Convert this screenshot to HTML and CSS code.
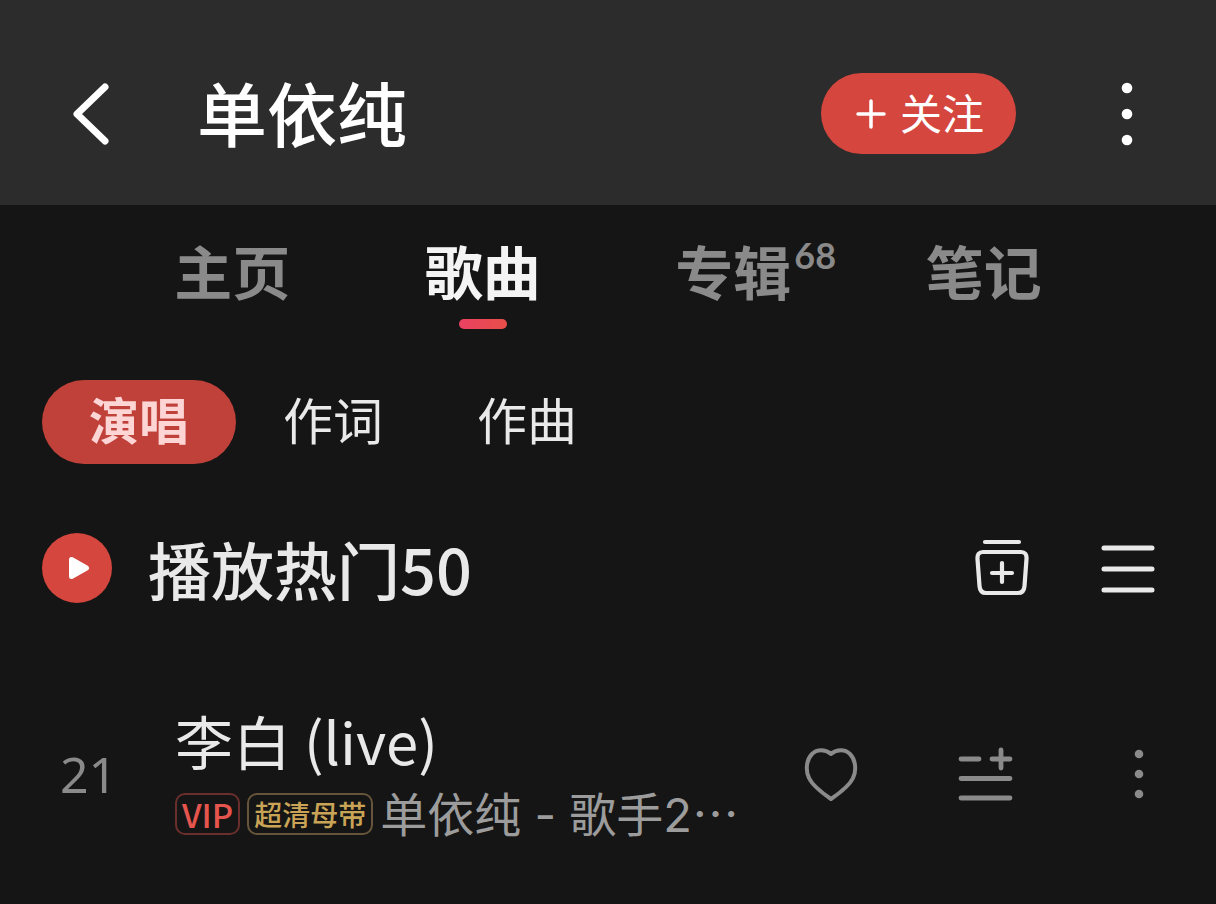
FILE: index.html
```html
<!DOCTYPE html>
<html lang="zh-CN">
<head>
    <meta charset="UTF-8">
    <meta name="viewport" content="width=device-width, initial-scale=1.0">
    <title>单依纯</title>
    <link rel="stylesheet" href="styles.css">
</head>

<body>

    <header class="header">
        <button class="icon-button back" aria-label="返回">
            <svg width="36" height="62" viewBox="0 0 36 62"><path d="M32 4 L4 31 L32 58" stroke-width="7"/></svg>
        </button>
        <h1 class="title">单依纯</h1>
        <button class="follow">
            <svg width="30" height="30" viewBox="0 0 30 30"><path d="M2 15H28M15 2V28" stroke-width="3.500"/></svg>
            <span class="follow-text">关注</span>
        </button>
        <button class="icon-button more" aria-label="更多">
            <svg class="dots" width="12" height="64" viewBox="0 0 12 64"><circle cx="6" cy="6" r="5.3"/><circle cx="6" cy="32" r="5.3"/><circle cx="6" cy="58" r="5.3"/></svg>
        </button>
    </header>

    <nav class="tabs">
        <a href="#home" class="tab">主页</a>
        <a href="#songs" class="tab active">歌曲</a>
        <a href="#albums" class="tab">专辑<span class="count">68</span></a>
        <a href="#notes" class="tab">笔记</a>
    </nav>

    <main>
        <div class="chips">
            <button class="chip selected">演唱</button>
            <button class="chip">作词</button>
            <button class="chip">作曲</button>
        </div>

        <section class="play-bar">
            <button class="play" aria-label="播放">
                <svg width="70" height="70" viewBox="0 0 70 70"><path d="M29.500 26.500V43.500L44.500 35Z" stroke-width="5"/></svg>
            </button>
            <h2 class="play-title">播放热门50</h2>
            <button class="icon-button" aria-label="添加到歌单">
                <svg width="54" height="58" viewBox="0 0 54 58">
                    <path d="M10 3H44M27 24V43M17 34H37" stroke-width="4.200"/>
                    <path d="M8 13H46Q52 13 51.500 20L49.500 47Q49 54 43 54H11Q5 54 4.500 47L2.500 20Q2 13 8 13Z" stroke-width="4.200"/>
                </svg>
            </button>
            <button class="icon-button list" aria-label="列表">
                <svg width="54" height="50" viewBox="0 0 54 50"><path d="M3 5H51M3 26H51M3 47H51" stroke-width="5"/></svg>
            </button>
        </section>

        <ul class="songs">
            <li class="song">
                <span class="number">21</span>
                <div class="info">
                    <h3 class="name">李白 (live)</h3>
                    <p class="meta">
                        <span class="badge vip">VIP</span>
                        <span class="badge quality">超清母带</span>
                        <span class="artist">单依纯 - 歌手2<span class="ellipsis">…</span></span>
                    </p>
                </div>
                <button class="icon-button like" aria-label="喜欢">
                    <svg width="54" height="54" viewBox="0 0 54 54"><path d="M27 7C21 2 13 2 8 7C2 13 1.500 24 5 31C9 39.500 19 46.500 27 52C35 46.500 45 39.500 49 31C52.500 24 52 13 46 7C41 2 33 2 27 7Z" stroke-width="4"/></svg>
                </button>
                <button class="icon-button queue" aria-label="下一首播放">
                    <svg width="56" height="56" viewBox="0 0 56 56"><path d="M4 13H22M35 13H53M44 4V22M4 32.500H53M4 52H53" stroke-width="4.800"/></svg>
                </button>
                <button class="icon-button" aria-label="更多操作">
                    <svg class="dots" width="10" height="50" viewBox="0 0 10 50"><circle cx="5" cy="5" r="4.300"/><circle cx="5" cy="25" r="4.300"/><circle cx="5" cy="45" r="4.300"/></svg>
                </button>
            </li>
        </ul>
    </main>

</body>
</html>
```
FILE: styles.css
```css
* {
    box-sizing: border-box;
}

body {
    margin: 0;
    min-height: 100vh;
    background-color: #151515;
    color: #e9e9e9;
    font-family: "Noto Sans CJK SC", sans-serif;
}

h1, h2, h3, p, ul {
    margin: 0;
    padding: 0;
}

button {
    border: none;
    padding: 0;
    background: none;
    color: inherit;
    font-family: inherit;
    cursor: pointer;
}

svg {
    display: block;
    fill: none;
    stroke: currentColor;
    stroke-linecap: round;
    stroke-linejoin: round;
}

.dots {
    fill: currentColor;
    stroke: none;
}

.icon-button {
    flex: none;
}

/* 顶部栏 */
.header {
    display: flex;
    align-items: center;
    padding: 72px 83px 50px 73px;
    background-color: #2c2c2c;
    color: #ffffff;
}

.title {
    flex: 1;
    margin-left: 88px;
    padding-bottom: 3px;
    font-size: 70px;
    line-height: 80px;
    font-weight: 500;
}

.follow {
    display: flex;
    align-items: center;
    gap: 14px;
    height: 81px;
    padding: 0 32px 0 35px;
    border-radius: 41px;
    background-color: #d4463e;
    font-size: 42px;
    white-space: nowrap;
}

.follow-text {
    padding-bottom: 4px;
}

.more {
    margin-left: 105px;
}

/* 标签页 */
.tabs {
    display: grid;
    grid-template-columns: repeat(4, 1fr);
    justify-items: center;
    padding: 25px 107px 55px;
}

.tab {
    position: relative;
    color: #8a8a8a;
    font-size: 58px;
    line-height: 80px;
    font-weight: 700;
    text-decoration: none;
}

.tab.active {
    color: #f4f4f4;
}

.tab.active::after {
    content: "";
    position: absolute;
    left: 50%;
    bottom: -19px;
    width: 48px;
    height: 10px;
    border-radius: 5px;
    background: linear-gradient(to right, #ea4162, #e84e48);
    transform: translateX(-50%);
}

.count {
    position: absolute;
    top: 5px;
    left: 100%;
    margin-left: 3px;
    font-family: Lato, sans-serif;
    font-size: 36px;
    line-height: 40px;
}

/* 分类 */
.chips {
    display: flex;
    padding: 15px 42px 0;
}

.chip {
    height: 84px;
    padding: 0 47px 8px;
    border-radius: 42px;
    font-size: 50px;
    line-height: 76px;
}

.chip.selected {
    background-color: #bf413a;
    color: #fcd5d4;
    font-weight: 700;
}

/* 播放栏 */
.play-bar {
    display: flex;
    align-items: center;
    padding: 64px 61px 0 42px;
}

.play {
    border-radius: 50%;
    background-color: #d4463e;
    color: #ffffff;
}

.play path {
    fill: currentColor;
}

.play-title {
    flex: 1;
    margin-left: 36px;
    font-size: 63px;
    line-height: 80px;
    font-weight: 500;
}

.list {
    margin-left: 72px;
}

/* 歌曲列表 */
.songs {
    list-style: none;
    padding-top: 92px;
}

.song {
    display: flex;
    align-items: center;
    padding: 0 72px 0 60px;
    color: #8a8a8a;
}

.number {
    width: 115px;
    font-family: "Noto Sans", sans-serif;
    font-size: 50px;
}

.info {
    flex: 1;
    min-width: 0;
}

.name {
    color: #e9e9e9;
    font-size: 58px;
    line-height: 80px;
    font-weight: 400;
}

.meta {
    display: flex;
    align-items: center;
    white-space: nowrap;
}

.badge {
    height: 42px;
    margin-right: 7px;
    padding: 0 5px;
    border: 2px solid #6a2f2c;
    border-radius: 10px;
    line-height: 38px;
}

.vip {
    color: #e5554d;
    font-size: 33px;
    font-weight: 500;
}

.quality {
    border-color: #66553a;
    color: #c9a456;
    font-size: 28px;
    font-weight: 500;
}

.artist {
    color: #9c9c9c;
    font-family: Inter, "Noto Sans CJK SC", sans-serif;
    font-size: 47px;
    line-height: 64px;
}

.ellipsis {
    font-family: "Noto Sans CJK SC", sans-serif;
}

.queue {
    margin: 0 121px 0 99px;
}
```
